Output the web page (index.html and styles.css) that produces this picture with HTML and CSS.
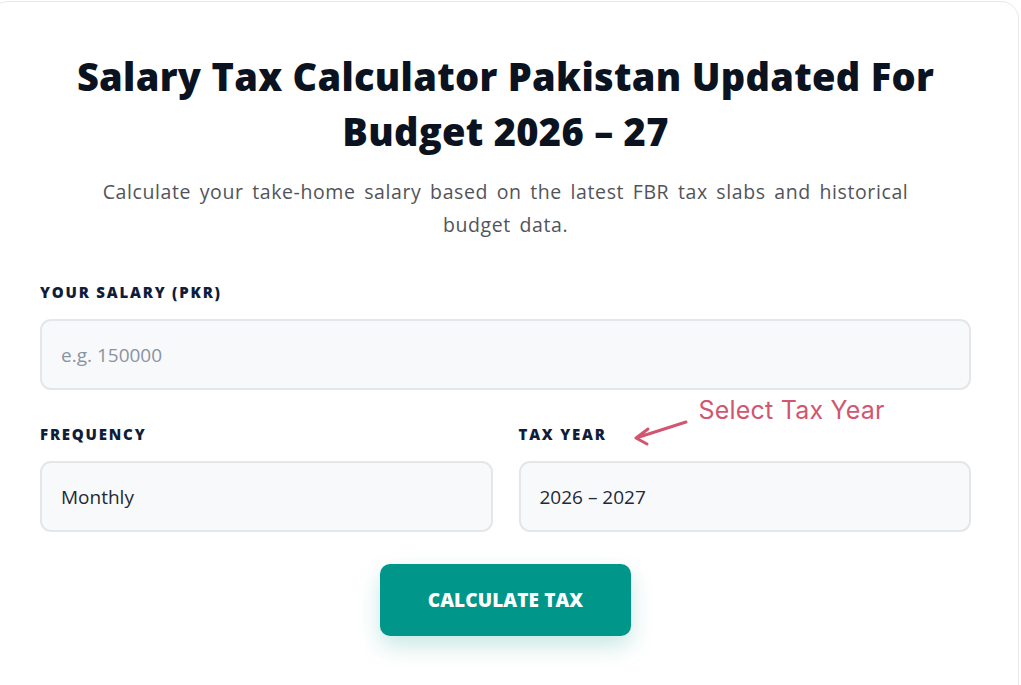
FILE: index.html
```html
<!DOCTYPE html>
<html lang="en">
<head>
<meta charset="utf-8">
<title>Salary Tax Calculator</title>
<link rel="stylesheet" href="styles.css">
</head>
<body>
<div class="card">
  <h1 class="title">Salary Tax Calculator Pakistan Updated For Budget 2026 – 27</h1>
  <p class="subtitle">Calculate your take-home salary based on the latest FBR tax slabs and historical budget data.</p>
  <div class="field">
    <label class="label">Your Salary (PKR)</label>
    <div class="input placeholder">e.g. 150000</div>
  </div>
  <div class="row">
    <div class="field">
      <label class="label">Frequency</label>
      <div class="input">Monthly</div>
    </div>
    <div class="field">
      <div class="label-wrap">
        <label class="label">Tax Year</label>
        <div class="note">
          <svg class="arrow" width="60" height="30" viewBox="0 0 60 30"><path d="M56 5 L6 21 M6 21 L18 12 M6 21 L17 27" fill="none" stroke="#d2566f" stroke-width="3" stroke-linecap="round" stroke-linejoin="round"/></svg>
          <span class="note-text">Select Tax Year</span>
        </div>
      </div>
      <div class="input">2026 – 2027</div>
    </div>
  </div>
  <div class="actions">
    <button class="btn">Calculate Tax</button>
  </div>
</div>
</body>
</html>
```
FILE: styles.css
```css
* { box-sizing: border-box; }
html, body { margin: 0; background: #ffffff; }
body {
  font-family: "Open Sans", "DejaVu Sans", sans-serif;
  overflow: hidden;
  height: 685px;
}
.card {
  margin-top: 1px;
  margin-left: -10px;
  width: 1029px;
  height: 700px;
  border: 1px solid #e6e8eb;
  border-radius: 18px;
  background: #fff;
  padding: 47px 47px 0 49px;
}
.title {
  margin: 0;
  text-align: center;
  font-size: 38px;
  line-height: 55px;
  font-weight: 800;
  color: #0b1220;
  letter-spacing: 0.3px;
  padding: 0 20px;
}
.subtitle {
  margin: 16px auto 0;
  text-align: center;
  font-size: 19.5px;
  line-height: 33px;
  letter-spacing: 0.6px;
  word-spacing: 3px;
  color: #52545a;
  max-width: 850px;
}
.field { display: flex; flex-direction: column; flex: 1; }
.label {
  display: block;
  font-size: 15px;
  font-weight: 800;
  letter-spacing: 1.8px;
  text-transform: uppercase;
  color: #0f1d3a;
  line-height: 20px;
}
.field > .label { margin-top: 41px; margin-bottom: 17px; }
.input {
  height: 71px;
  border: 2px solid #e4e7ea;
  border-radius: 11px;
  background: #f8f9fa;
  padding: 0 19px;
  display: flex;
  align-items: center;
  font-size: 19px;
  color: #1f2937;
}
.placeholder { color: #8a93a3; }
.row { display: flex; gap: 26px; }
.row .field > .label { margin-top: 34px; }
.label-wrap {
  display: flex;
  align-items: flex-end;
  margin-top: 34px;
  margin-bottom: 17px;
  height: 20px;
  position: relative;
}
.note {
  position: absolute;
  left: 111px;
  top: -29px;
  display: flex;
  align-items: flex-start;
}
.arrow { margin-top: 22px; }
.note-text {
  font-family: "Inter", "Liberation Sans", sans-serif;
  font-size: 25px;
  color: #d2566f;
  line-height: 30px;
  margin-left: 9px;
  letter-spacing: 0.2px;
}
.actions { display: flex; justify-content: center; margin-top: 32px; }
.btn {
  width: 251px;
  height: 72px;
  border: none;
  border-radius: 10px;
  background: #00978a;
  color: #fff;
  font-family: "Open Sans", "DejaVu Sans", sans-serif;
  font-size: 19px;
  font-weight: 800;
  text-transform: uppercase;
  letter-spacing: 0.1px;
  box-shadow: 0 10px 22px rgba(0, 150, 136, 0.22);
}
```
